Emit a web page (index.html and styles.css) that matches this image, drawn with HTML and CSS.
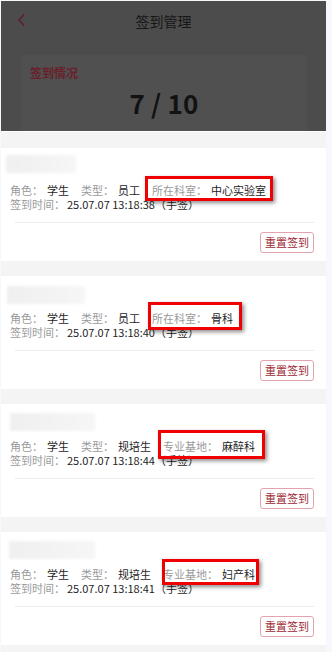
FILE: index.html
```html
<!DOCTYPE html>
<html lang="zh-CN">
<head>
<meta charset="utf-8">
<title>签到管理</title>
<link rel="stylesheet" href="styles.css">
</head>
<body>
<div class="page">
  <header class="header">
    <div class="navbar">
      <svg class="back" width="10" height="14" viewBox="0 0 10 14"><polyline points="7,1.5 2,7 7,12.5" fill="none" stroke="#5e1d2a" stroke-width="1.4"/></svg>
      <div class="title">签到管理</div>
    </div>
    <div class="summary">
      <div class="summary-label">签到情况</div>
      <div class="summary-count">7 / 10</div>
    </div>
  </header>

  <main class="list">
    <section class="card">
      <div class="name n1"></div>
      <div class="row"><span class="lbl">角色：</span><span class="val">学生</span><span class="lbl">类型：</span><span class="val">员工</span><span class="lbl">所在科室：</span><span class="val">中心实验室</span></div>
      <div class="row"><span class="lbl t">签到时间：</span><span class="val">25.07.07 13:18:38（手签）</span></div>
      <div class="divider"></div>
      <div class="actions"><button class="btn">重置签到</button></div>
      <div class="mark m1"></div>
    </section>

    <section class="card">
      <div class="name n2"></div>
      <div class="row"><span class="lbl">角色：</span><span class="val">学生</span><span class="lbl">类型：</span><span class="val">员工</span><span class="lbl">所在科室：</span><span class="val">骨科</span></div>
      <div class="row"><span class="lbl t">签到时间：</span><span class="val">25.07.07 13:18:40（手签）</span></div>
      <div class="divider"></div>
      <div class="actions"><button class="btn">重置签到</button></div>
      <div class="mark m2"></div>
    </section>

    <section class="card">
      <div class="name n3"></div>
      <div class="row"><span class="lbl">角色：</span><span class="val">学生</span><span class="lbl">类型：</span><span class="val">规培生</span><span class="lbl">专业基地：</span><span class="val">麻醉科</span></div>
      <div class="row"><span class="lbl t">签到时间：</span><span class="val">25.07.07 13:18:44（手签）</span></div>
      <div class="divider"></div>
      <div class="actions"><button class="btn">重置签到</button></div>
      <div class="mark m3"></div>
    </section>

    <section class="card">
      <div class="name n4"></div>
      <div class="row"><span class="lbl">角色：</span><span class="val">学生</span><span class="lbl">类型：</span><span class="val">规培生</span><span class="lbl">专业基地：</span><span class="val">妇产科</span></div>
      <div class="row"><span class="lbl t">签到时间：</span><span class="val">25.07.07 13:18:41（手签）</span></div>
      <div class="divider"></div>
      <div class="actions"><button class="btn">重置签到</button></div>
      <div class="mark m4"></div>
    </section>
  </main>
</div>
</body>
</html>
```

FILE: styles.css
```css
html, body {
  margin: 0;
  padding: 0;
}
body {
  background: #f7f8fc;
  font-family: "Noto Sans CJK SC", "Noto Sans", sans-serif;
  height: 652px;
  overflow: hidden;
}
.page {
  margin: 1px 0 0 1px;
  width: 325px;
  background: #f4f4f5;
  min-height: 651px;
}
.header {
  height: 130px;
  background: #4c4c4c;
  overflow: hidden;
  border-bottom: 1px solid #ffffff;
}
.navbar {
  position: relative;
  height: 40px;
  display: flex;
  align-items: center;
  justify-content: center;
}
.back {
  position: absolute;
  left: 16px;
  top: 12px;
}
.title {
  font-size: 14px;
  color: #161616;
  line-height: 20px;
  margin-top: -1px;
}
.summary {
  margin: 14px 19px 0 20px;
  background: #505050;
  border-radius: 6px;
  height: 100px;
  padding: 9px 0 0 9px;
  box-sizing: border-box;
}
.summary-label {
  font-size: 12px;
  font-weight: 700;
  color: #6a1f2b;
  line-height: 18px;
}
.summary-count {
  font-size: 26px;
  font-weight: 700;
  color: #121212;
  text-align: center;
  line-height: 32px;
  margin: 5px 0 0 -9px;
  letter-spacing: 0.2px;
}
.list {
  padding-top: 16px;
  display: flex;
  flex-direction: column;
  gap: 15px;
}
.card {
  position: relative;
  background: #ffffff;
  height: 113px;
  padding: 7px 0 0 9px;
  box-sizing: border-box;
}
.name {
  height: 18px;
  background: linear-gradient(90deg, #efefef, #f3f3f3 60%, #f6f6f6);
  filter: blur(1.5px);
  margin-bottom: 10px;
}
.n1 { width: 70px; margin-left: -4px; }
.n2 { width: 78px; margin-left: -3px; margin-top: 3px; margin-bottom: 7px; }
.n3 { width: 85px; margin-left: 0; margin-top: 2px; margin-bottom: 8px; }
.n4 { width: 86px; margin-left: -1px; margin-top: 2px; margin-bottom: 8px; }
.row {
  font-size: 11px;
  line-height: 14px;
  white-space: nowrap;
}
.lbl {
  color: #9a9a9a;
  margin-right: 4px;
}
.lbl.t {
  margin-right: 2px;
}
.val {
  color: #1e1e1e;
  margin-right: 12px;
}
.divider {
  height: 1px;
  background: #ececec;
  margin: 11px 12px 0 5px;
}
.actions {
  display: flex;
  justify-content: flex-end;
  margin: 9px 12px 0 0;
}
.btn {
  font-family: inherit;
  font-size: 11px;
  line-height: 19px;
  height: 21px;
  padding: 0 4px;
  border: 1px solid #e2a3ab;
  border-radius: 3px;
  background: #ffffff;
  color: #9c2b36;
}
.mark {
  position: absolute;
  border: 3px solid #f00000;
  box-shadow: 2px 2px 4px rgba(0, 0, 0, 0.45);
  box-sizing: border-box;
}
.m1 { left: 144px; top: 28px; width: 128px; height: 25px; }
.m2 { left: 147px; top: 26px; width: 94px; height: 28px; }
.m3 { left: 157px; top: 26px; width: 107px; height: 29px; }
.m4 { left: 161px; top: 27px; width: 97px; height: 26px; }
```
